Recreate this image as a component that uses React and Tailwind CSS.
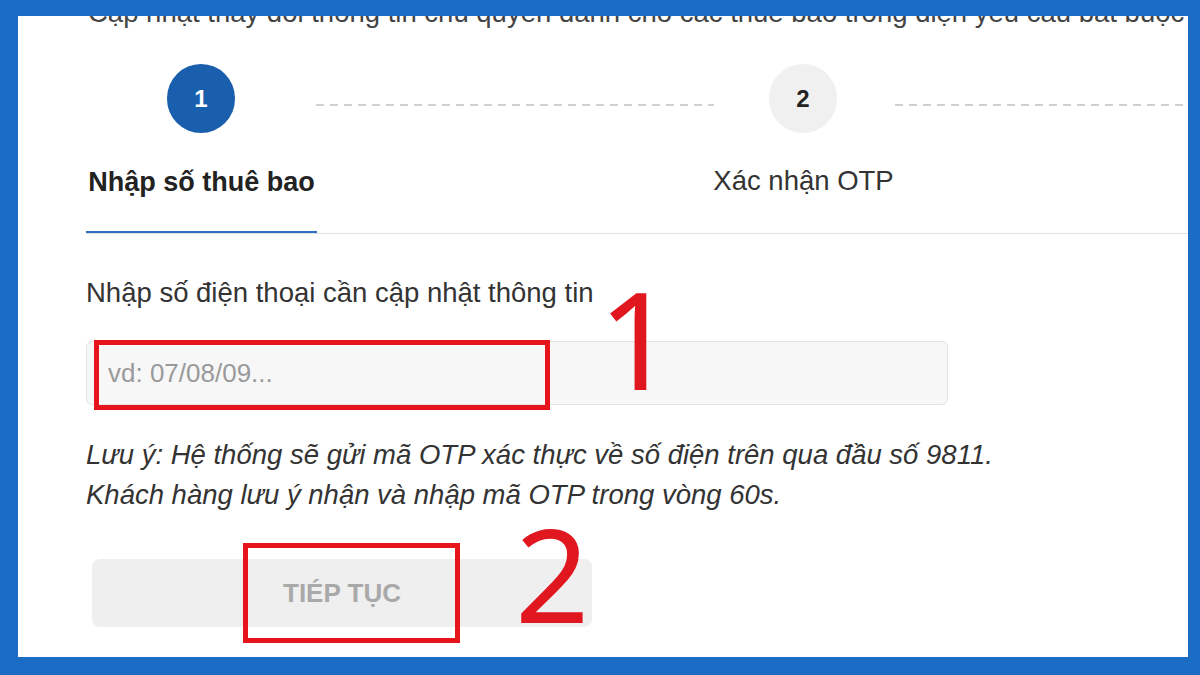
// Màn hình cập nhật thông tin thuê bao, bước 1: nhập số điện thoại.
// Khung xanh bao quanh + chú thích đỏ (ô và số) đè lên nội dung.

const font = { fontFamily: '"Liberation Sans", Arial, sans-serif' };

function Dashes({ className }) {
  return (
    <div
      className={`h-[2px] bg-[repeating-linear-gradient(90deg,#cfcfcf_0_8px,transparent_8px_14px)] ${className}`}
    />
  );
}

function StepCircle({ n, active }) {
  return (
    <div
      className={`shrink-0 w-[68px] h-[69px] rounded-full flex items-center justify-center text-[24px] font-bold ${
        active ? 'bg-[#1a5fae] text-white' : 'bg-[#f0f0f0] text-[#222]'
      }`}
    >
      {n}
    </div>
  );
}

export default function App() {
  return (
    <div className="w-[1200px] h-[675px] bg-[#1a6cc4] pt-[16px] pl-[18px] pr-[12px] pb-[18px]" style={font}>
      <div className="relative w-full h-full bg-white overflow-hidden">
        {/* Dòng tiêu đề bị cắt phía trên */}
        <p className="-mt-[19px] pl-[70px] whitespace-nowrap text-[27.5px] leading-[32px] text-[#444]">
          Cập nhật thay đổi thông tin chủ quyền dành cho các thuê bao trong diện yêu cầu bắt buộc
        </p>

        {/* Các bước */}
        <div className="mt-[35px] flex items-center pl-[149px]">
          <StepCircle n="1" active />
          <Dashes className="ml-[81px] w-[398px] mt-[12px]" />
          <div className="ml-[55px]">
            <StepCircle n="2" />
          </div>
          <Dashes className="ml-[58px] flex-1 mt-[12px]" />
        </div>

        {/* Tab */}
        <div className="mt-[13px] ml-[68px] flex border-b border-[#e2e2e2]">
          <div className="w-[231px] h-[87px] flex items-center justify-center border-b-2 border-[#2a6fc0] -mb-px">
            <span className="text-[27px] font-bold text-[#222] pb-[12px] whitespace-nowrap">Nhập số thuê bao</span>
          </div>
          <div className="ml-[371px] w-[231px] h-[87px] flex items-center justify-center">
            <span className="text-[27.5px] text-[#333] pb-[17px] whitespace-nowrap">Xác nhận OTP</span>
          </div>
        </div>

        {/* Form */}
        <div className="pl-[68px] pt-[44px]">
          <p className="text-[27.5px] leading-[30px] text-[#333]">Nhập số điện thoại cần cập nhật thông tin</p>
          <div className="mt-[33px] w-[862px] h-[64px] rounded-md border border-[#e3e3e3] bg-[#f7f7f7] flex items-center pl-[21px]">
            <span className="text-[26px] text-[#9a9a9a]">vd: 07/08/09...</span>
          </div>
          <div className="mt-[30px] italic text-[27.5px] leading-[40px] text-[#333] whitespace-nowrap">
            <p>Lưu ý: Hệ thống sẽ gửi mã OTP xác thực về số điện trên qua đầu số 9811.</p>
            <p>Khách hàng lưu ý nhận và nhập mã OTP trong vòng 60s.</p>
          </div>
          <button className="mt-[44px] ml-[6px] w-[500px] h-[68px] rounded-lg bg-[#efefef] text-[26px] font-semibold text-[#a9a9a9]">
            TIÉP TỤC
          </button>
        </div>

        {/* Chú thích đỏ */}
        <div className="absolute left-[76px] top-[324px] w-[456px] h-[70px] border-[5px] border-[#e8141c]" />
        <div className="absolute left-[225px] top-[527px] w-[217px] h-[100px] border-[5px] border-[#e8141c]" />
        <span
          className="absolute left-[580px] top-[254px] text-[136px] leading-none text-[#e0171f]"
          style={{ fontFamily: '"Noto Sans", sans-serif' }}
        >
          1
        </span>
        <span
          className="absolute left-[497px] top-[492px] text-[130px] leading-none text-[#e0171f]"
          style={{ fontFamily: '"Noto Sans", sans-serif' }}
        >
          2
        </span>
      </div>
    </div>
  );
}
